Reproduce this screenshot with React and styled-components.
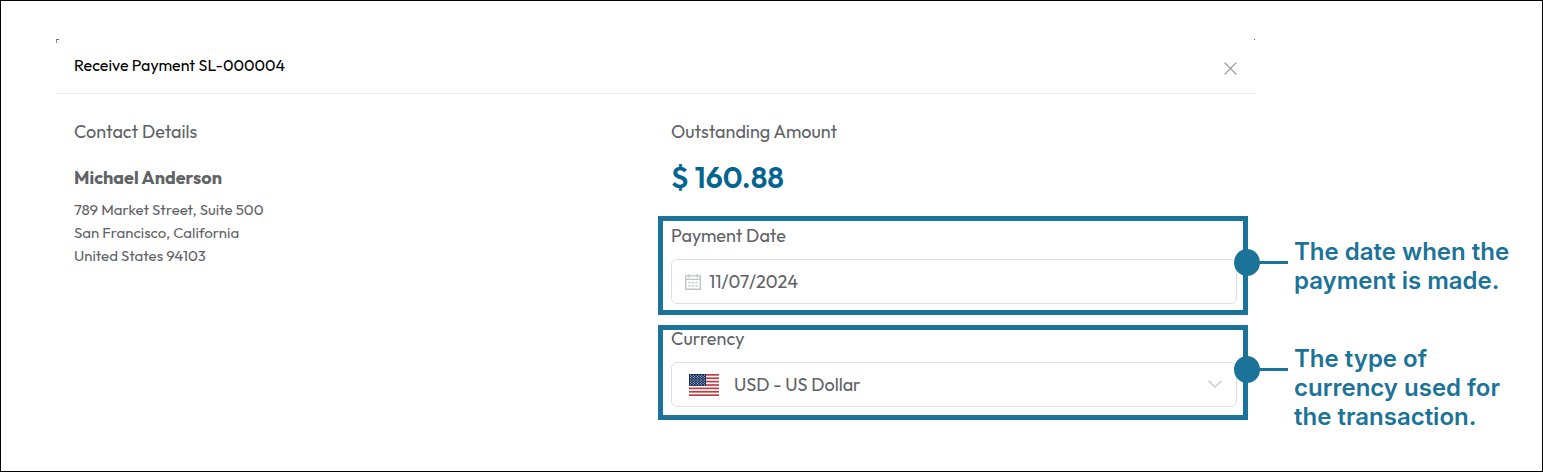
import React, { useState } from "react";
import styled, { createGlobalStyle } from "styled-components";

const GlobalStyle = createGlobalStyle`
  * {
    box-sizing: border-box;
  }

  body {
    margin: 0;
    background: #fff;
    color: #606266;
    font-family: Outfit, Lato, sans-serif;
  }
`;

const Page = styled.main`
  display: grid;
  grid-template-columns: minmax(0, 602fr) minmax(0, 597fr) 287px;
  grid-template-rows: auto 1fr;
  min-height: 100vh;
  padding: 38px 0 0 55px;
  border: 1px solid #000;
`;

const Header = styled.header`
  position: relative;
  grid-column: 1 / 3;
  display: flex;
  justify-content: space-between;
  align-items: center;
  height: 55px;
  padding: 0 18px 2px;
  border-bottom: 1px solid #ebebeb;

  &::before,
  &::after {
    content: "";
    position: absolute;
    top: 0;
    left: 0;
    width: 2px;
    height: 3px;
    border-top: 1px solid #666;
    border-left: 1px solid #888;
  }

  &::after {
    left: auto;
    right: 0;
    width: 1px;
    height: 1px;
    border-left: 0;
  }
`;

const Title = styled.h1`
  margin: 0;
  color: #000;
  font-size: 16px;
  font-weight: 400;
  line-height: 24px;
`;

const CloseButton = styled.button`
  display: flex;
  margin: 6px 0 0;
  padding: 0;
  border: 0;
  background: none;
  color: #909399;
  cursor: pointer;
`;

const Contact = styled.section`
  grid-column: 1 / 2;
  padding: 28px 18px;
`;

const Payment = styled.section`
  grid-column: 2 / 4;
  padding-top: 28px;
`;

const SectionTitle = styled.h2`
  margin: 0;
  font-size: 18px;
  font-weight: 400;
  line-height: 20px;
`;

const ContactName = styled.h3`
  margin: 24px 0 8px;
  font-size: 18px;
  font-weight: 700;
  line-height: 24px;
`;

const Address = styled.address`
  font-size: 15px;
  font-style: normal;
  line-height: 23px;
`;

const Outstanding = styled.div`
  padding: 0 13px 21px;
`;

const Amount = styled.p`
  margin: 17px 0 0;
  color: #03658f;
  font-size: 30px;
  font-weight: 600;
  line-height: 36px;
`;

const FieldRow = styled.div`
  display: flex;
  align-items: flex-start;
  margin-bottom: 10px;
`;

const Highlight = styled.div`
  flex: 1;
  min-width: 0;
  padding: ${(props) => (props.$compact ? "0 6px 8px 8px" : "6px 6px 6px 8px")};
  border: 5px solid #1c7399;
`;

const Label = styled.label`
  display: block;
  margin-bottom: 14px;
  font-size: 18px;
  line-height: 18px;
`;

const FieldBox = styled.div`
  display: flex;
  align-items: center;
  gap: ${(props) => props.$gap};
  height: 45px;
  padding: ${(props) => props.$pad};
  border: 1px solid #dcdfe6;
  border-radius: 6px;
`;

const fieldText = `
  flex: 1;
  min-width: 0;
  padding: 0;
  border: 0;
  outline: 0;
  background: none;
  color: #606266;
  font-family: inherit;
  font-size: 18px;
  line-height: 24px;
`;

const DateInput = styled.input`
  ${fieldText}
`;

const CurrencySelect = styled.select`
  ${fieldText}
  appearance: none;
`;

const Callout = styled.aside`
  display: flex;
  align-items: flex-start;
  width: 294px;
  padding-top: ${(props) => (props.$compact ? "19px" : "21px")};
`;

const Connector = styled.span`
  position: relative;
  flex: none;
  width: 40px;
  height: 3px;
  margin: 24px 6px 0 0;
  background: #1c7399;

  &::before {
    content: "";
    position: absolute;
    top: -12px;
    left: -14px;
    width: 26px;
    height: 27px;
    border-radius: 50%;
    background: #1c7399;
  }
`;

const Note = styled.p`
  margin: 0;
  color: #1c7399;
  font-family: Inter, sans-serif;
  font-size: 24px;
  font-weight: 600;
  line-height: 29px;
`;

const CloseIcon = () => (
  <svg width="13" height="13" viewBox="0 0 13 13" fill="none" stroke="currentColor" strokeWidth="1.3">
    <path d="M.6.6l11.8 11.8M12.4.6L.6 12.4" />
  </svg>
);

const CalendarIcon = () => (
  <svg width="16" height="16" viewBox="0 0 16 16" fill="none" stroke="#c0c4cc">
    <path d="M.7 1.9h14.6v13.4H.7zM.7 5.4h14.6" strokeWidth="1.4" />
    <path d="M4 0v3.4M12 0v3.4" strokeWidth="1.4" />
    <path d="M3.2 8.6h2.4M6.8 8.6h2.4M10.4 8.6h2.4M3.2 11.8h2.4M6.8 11.8h2.4M10.4 11.8h2.4" strokeWidth="1.3" />
  </svg>
);

const ChevronIcon = () => (
  <svg width="14" height="10" viewBox="0 0 14 10" fill="none" stroke="#c0c4cc" strokeWidth="1.3">
    <path d="M.6.8L7 7.1 13.4.8" />
  </svg>
);

const stripes = [0, 2, 4, 6, 8, 10, 12];
const starRows = [0, 1, 2, 3, 4, 5, 6, 7, 8];

const FlagIcon = () => (
  <svg width="30" height="22" viewBox="0 0 30 22">
    <rect width="30" height="22" fill="#fff" />
    {stripes.map((n) => (
      <rect key={n} y={(n * 22) / 13} width="30" height={22 / 13} fill="#bd3d44" />
    ))}
    <rect width="17" height={(22 * 7) / 13} fill="#192f5d" />
    {starRows.map((row) =>
      Array.from({ length: row % 2 ? 5 : 6 }, (_, i) => (
        <circle
          key={`${row}-${i}`}
          cx={1.5 + i * 2.8 + (row % 2 ? 1.4 : 0)}
          cy={1.2 + row * 1.18}
          r="0.5"
          fill="#dfe4ee"
        />
      ))
    )}
  </svg>
);

const ReceivePayment = () => {
  const [date, setDate] = useState("11/07/2024");

  return (
    <Page>
      <GlobalStyle />

      <Header>
        <Title>Receive Payment SL-000004</Title>
        <CloseButton type="button" aria-label="Close">
          <CloseIcon />
        </CloseButton>
      </Header>

      <Contact>
        <SectionTitle>Contact Details</SectionTitle>
        <ContactName>Michael Anderson</ContactName>
        <Address>
          789 Market Street, Suite 500
          <br />
          San Francisco, California
          <br />
          United States 94103
        </Address>
      </Contact>

      <Payment>
        <Outstanding>
          <SectionTitle>Outstanding Amount</SectionTitle>
          <Amount>$ 160.88</Amount>
        </Outstanding>

        <FieldRow>
          <Highlight>
            <Label htmlFor="payment-date">Payment Date</Label>
            <FieldBox $gap="8px" $pad="0 13px">
              <CalendarIcon />
              <DateInput id="payment-date" value={date} onChange={(e) => setDate(e.target.value)} />
            </FieldBox>
          </Highlight>
          <Callout>
            <Connector />
            <Note>
              The date when the
              <br />
              payment is made.
            </Note>
          </Callout>
        </FieldRow>

        <FieldRow>
          <Highlight $compact>
            <Label htmlFor="currency">Currency</Label>
            <FieldBox $gap="15px" $pad="0 14px 0 17px">
              <FlagIcon />
              <CurrencySelect id="currency" defaultValue="USD">
                <option value="USD">USD - US Dollar</option>
              </CurrencySelect>
              <ChevronIcon />
            </FieldBox>
          </Highlight>
          <Callout $compact>
            <Connector />
            <Note>
              The type of
              <br />
              currency used for
              <br />
              the transaction.
            </Note>
          </Callout>
        </FieldRow>
      </Payment>
    </Page>
  );
};

export default ReceivePayment;
